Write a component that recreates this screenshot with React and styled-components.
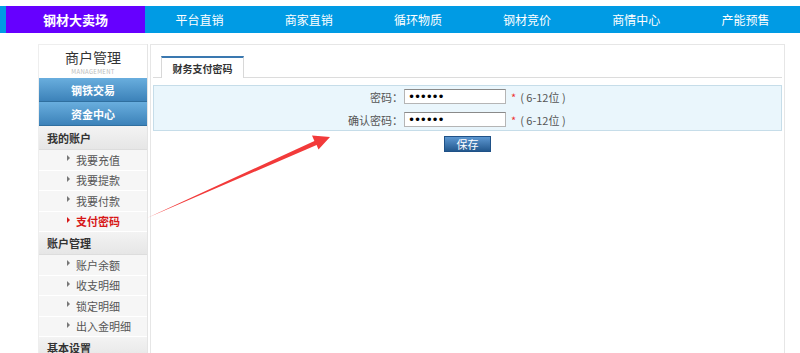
import React from 'react'
import styled, { createGlobalStyle } from 'styled-components'

const GlobalStyle = createGlobalStyle`
    body {
        margin: 0;
        background: #fff;
        font-family: "Noto Sans CJK SC", "Noto Sans", sans-serif;
        font-size: 11px;
        color: #555;
    }
`

const Page = styled.div`
    position: relative;
    width: 800px;
    height: 353px;
    overflow: hidden;
    padding-top: 6px;
    box-sizing: border-box;
`

const NavBar = styled.div`
    display: flex;
    height: 27px;
    background: #009be4;
    padding-left: 6px;
`

const Brand = styled.div`
    width: 139px;
    display: flex;
    align-items: center;
    justify-content: center;
    background: #6600ff;
    color: #fff;
    font-size: 13px;
    font-weight: bold;
`

const NavItem = styled.div`
    flex: 1;
    display: flex;
    align-items: center;
    justify-content: center;
    color: #fff;
    font-size: 12px;
`

const Body = styled.div`
    display: flex;
    gap: 2px;
    padding: 11px 0 0 38px;
`

const Sidebar = styled.div`
    width: 110px;
    flex-shrink: 0;
    border-left: 1px solid #eee;
    border-right: 1px solid #e4e4e4;
    box-sizing: border-box;
`

const SideHead = styled.div`
    height: 34px;
    display: flex;
    flex-direction: column;
    align-items: center;
    justify-content: center;
    gap: 1px;
    border-top: 1px solid #eee;
    box-sizing: border-box;
`

const SideTitle = styled.div`
    font-size: 14px;
    color: #333;
    line-height: 20px;
    height: 20px;
`

const SideSub = styled.div`
    font-size: 6px;
    color: #bbb;
    letter-spacing: 0.3px;
    line-height: 8px;
    height: 8px;
`

const BlueButton = styled.div`
    height: 24px;
    display: flex;
    align-items: center;
    justify-content: center;
    background: linear-gradient(#69aede, #3c82b9);
    border-bottom: 1px solid #2f6f9f;
    box-sizing: border-box;
    color: #fff;
    font-weight: bold;
    font-size: 11px;
`

const Section = styled.div`
    height: ${p => p.$h}px;
    display: flex;
    align-items: center;
    padding-left: 8px;
    background: linear-gradient(#f3f3f3, #e6e6e6);
    border-bottom: 1px solid #ddd;
    box-sizing: border-box;
    color: #333;
    font-weight: bold;
    font-size: 11px;
`

const Item = styled.div`
    height: 20.5px;
    display: flex;
    align-items: center;
    padding-left: 28px;
    gap: 6px;
    background: #f6f6f6;
    border-bottom: 1px solid #fff;
    box-sizing: border-box;
    font-size: 11px;
    color: ${p => (p.$active ? '#d71818' : '#555')};
    font-weight: ${p => (p.$active ? 'bold' : 'normal')};
`

const Bullet = styled.span`
    width: 0;
    height: 0;
    border-top: 3px solid transparent;
    border-bottom: 3px solid transparent;
    border-left: 3px solid ${p => (p.$active ? '#d71818' : '#777')};
    margin-top: -3px;
`

const Main = styled.div`
    width: 635px;
    height: 320px;
    border: 1px solid #e6e6e6;
    box-sizing: border-box;
    padding: 0 2px;
`

const TabBar = styled.div`
    display: flex;
    height: 32px;
    align-items: flex-end;
    padding-left: 8px;
    border-bottom: 1px solid #dcdcdc;
`

const Tab = styled.div`
    width: 83px;
    height: 22px;
    display: flex;
    align-items: center;
    justify-content: center;
    border-top: 2px solid #3a78b0;
    border-left: 1px solid #d8d8d8;
    border-right: 1px solid #d8d8d8;
    box-sizing: border-box;
    background: #fff;
    margin-bottom: -1px;
    color: #333;
    font-weight: bold;
    font-size: 10px;
`

const FormBox = styled.div`
    margin-top: 7px;
    height: 46px;
    background: #eaf6fc;
    border: 1px solid #c6dde9;
    box-sizing: border-box;
    display: flex;
    flex-direction: column;
    justify-content: center;
    gap: 8px;
`

const Row = styled.div`
    display: flex;
    align-items: center;
    height: 15px;
`

const Label = styled.label`
    width: 249px;
    text-align: right;
    color: #555;
    font-size: 11px;
`

const Input = styled.input`
    width: 102px;
    height: 15px;
    margin: 0 0 0 1px;
    padding: 0 3px;
    box-sizing: border-box;
    border: 1px solid #b5b5b5;
    border-top-color: #8a8a8a;
    background: #fff;
    font-family: "DejaVu Sans", sans-serif;
    font-size: 12px;
    letter-spacing: -1.2px;
    color: #000;
    outline: none;
`

const Star = styled.span`
    color: #e33;
    margin-left: 5px;
    font-size: 11px;
`

const Hint = styled.span`
    margin-left: 4px;
    color: #555;
    font-size: 11px;
`

const Actions = styled.div`
    display: flex;
    justify-content: center;
    padding-top: 5px;
`

const SaveButton = styled.button`
    width: 47px;
    height: 16px;
    padding: 0;
    border: 1px solid #1f5187;
    background: linear-gradient(#5d97d1, #23588e);
    color: #fff;
    font-family: inherit;
    font-size: 11px;
    line-height: 14px;
`

const Arrow = styled.svg`
    position: absolute;
    left: 0;
    top: 0;
    pointer-events: none;
`

const accountItems = ['我要充值', '我要提款', '我要付款', '支付密码']
const manageItems = ['账户余额', '收支明细', '锁定明细', '出入金明细']
const navItems = ['平台直销', '商家直销', '循环物质', '钢材竞价', '商情中心', '产能预售']

const App = () =>
{
    return (
        <>
            <GlobalStyle />
            <Page>
                <NavBar>
                    <Brand>钢材大卖场</Brand>
                    {navItems.map(n => <NavItem key={n}>{n}</NavItem>)}
                </NavBar>

                <Body>
                    <Sidebar>
                        <SideHead>
                            <SideTitle>商户管理</SideTitle>
                            <SideSub>MANAGEMENT</SideSub>
                        </SideHead>
                        <BlueButton>钢铁交易</BlueButton>
                        <BlueButton>资金中心</BlueButton>

                        <Section $h={24}>我的账户</Section>
                        {accountItems.map(i => (
                            <Item key={i} $active={i === '支付密码'}>
                                <Bullet $active={i === '支付密码'} />{i}
                            </Item>
                        ))}

                        <Section $h={23}>账户管理</Section>
                        {manageItems.map(i => (
                            <Item key={i}><Bullet />{i}</Item>
                        ))}

                        <Section $h={23}>基本设置</Section>
                    </Sidebar>

                    <Main>
                        <TabBar>
                            <Tab>财务支付密码</Tab>
                        </TabBar>
                        <FormBox>
                            <Row>
                                <Label>密码：</Label>
                                <Input type='password' defaultValue='123456' readOnly />
                                <Star>*</Star>
                                <Hint>( 6-12位 )</Hint>
                            </Row>
                            <Row>
                                <Label>确认密码：</Label>
                                <Input type='password' defaultValue='123456' readOnly />
                                <Star>*</Star>
                                <Hint>( 6-12位 )</Hint>
                            </Row>
                        </FormBox>
                        <Actions>
                            <SaveButton type='button'>保存</SaveButton>
                        </Actions>
                    </Main>
                </Body>

                {/* red annotation arrow */}
                <Arrow width='800' height='353' viewBox='0 0 800 353'>
                    <polygon
                        points='147,218 314.4,141 312,135.5 330,137 318.5,149.5 316.6,145'
                        fill='#f23a3a'
                    />
                </Arrow>
            </Page>
        </>
    )
}

export default App
